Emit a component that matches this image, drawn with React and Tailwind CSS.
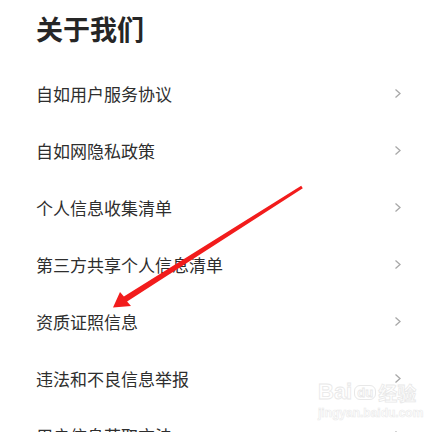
import React from "react";

const items = [
  "自如用户服务协议",
  "自如网隐私政策",
  "个人信息收集清单",
  "第三方共享个人信息清单",
  "资质证照信息",
  "违法和不良信息举报",
  "用户信息获取方法",
];

function Chevron() {
  return (
    <svg width="8" height="11" viewBox="0 0 8 11" className="shrink-0">
      <polyline points="1.5,1.5 6,5.5 1.5,9.5" fill="none" stroke="#a8a8a8" strokeWidth="1.3" />
    </svg>
  );
}

export default function App() {
  return (
    <div
      className="relative w-[436px] h-[432px] overflow-hidden bg-white"
      style={{ fontFamily: '"Noto Sans CJK SC", "Noto Sans", sans-serif' }}
    >
      <div className="pt-[15px] pl-[36px] text-[27px] leading-[27px] font-bold text-[#262626]">
        关于我们
      </div>
      <div className="mt-[23px] flex flex-col">
        {items.map((t) => (
          <div key={t} className="h-[57px] flex items-center justify-between pl-[36px] pr-[34px]">
            <span className="text-[17px] leading-none text-[#2e2e2e]">{t}</span>
            <Chevron />
          </div>
        ))}
      </div>

      {/* watermark */}
      <div className="absolute left-[318px] top-[381px] flex flex-col items-start pointer-events-none">
        <div className="flex items-center gap-[2px] text-[22px] leading-none font-bold text-transparent" style={{ WebkitTextStroke: "0.8px #e8e8e8" }}>
          <span style={{ fontFamily: '"Liberation Sans", sans-serif' }}>Bai</span>
          <span className="text-[13px] rounded-[6px] border border-[#e8e8e8] px-[2px]" style={{ fontFamily: '"Liberation Sans", sans-serif' }}>du</span>
          <span className="text-[19px]">经验</span>
        </div>
        <div className="mt-[4px] text-[12px] leading-none text-transparent font-bold" style={{ WebkitTextStroke: "0.6px #eaeaea", fontFamily: '"Liberation Sans", sans-serif' }}>
          jingyan.baidu.com
        </div>
      </div>

      {/* red arrow */}
      <svg className="absolute left-0 top-0" width="436" height="432" viewBox="0 0 436 432">
        <polygon
          points="301.2,185.7 302.8,188.3 127.1,301.5 131,306 113,307.5 120,292 123.9,296.5"
          fill="#f21c1c"
        />
      </svg>
    </div>
  );
}
